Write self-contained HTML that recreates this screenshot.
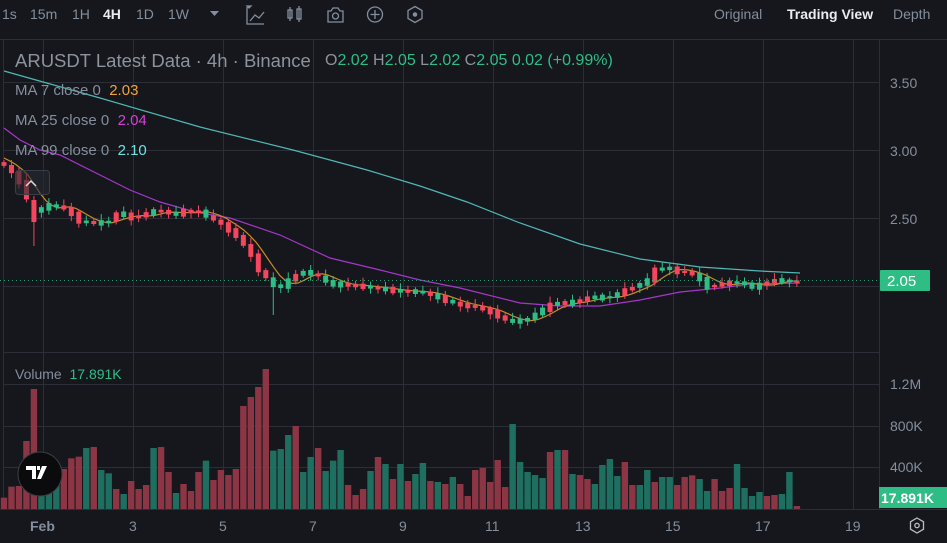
<!DOCTYPE html>
<html><head><meta charset="utf-8">
<style>
*{margin:0;padding:0;box-sizing:border-box}
body{width:947px;height:543px;background:#16171d;overflow:hidden;font-family:"Liberation Sans",sans-serif;position:relative;color:#848e9c}
.t{position:absolute;white-space:nowrap}
</style></head><body>
<svg id="c" width="947" height="543" style="position:absolute;left:0;top:0">
<rect width="947" height="543" fill="#16171d"/>
<line x1="0" y1="39.5" x2="947" y2="39.5" stroke="#2b2e36"/>
<g id="grid" stroke="#2b2e36" stroke-width="1"></g>
<g id="ma"></g>
<g id="cand"></g>
<g id="vol"></g>
<line x1="0" y1="280.5" x2="879" y2="280.5" stroke="#2ebd85" stroke-dasharray="1,3" opacity="0.8"/>
<g fill="none" stroke="#848e9c" stroke-width="1.3">
<path d="M247 7v17h17M250 21l5-6 4 3 5-6"/><path d="M247 6h4l-2 2z" fill="#848e9c"/>
<rect x="288" y="10" width="4" height="8"/><line x1="290" y1="7" x2="290" y2="21"/>
<rect x="297" y="9" width="4" height="10"/><line x1="299" y1="6" x2="299" y2="22"/>
<path d="M328 11h3l2-3h5l2 3h3v11h-15z"/><circle cx="335.5" cy="16" r="3"/>
<circle cx="375" cy="14.5" r="7.5"/><path d="M375 10v9M370.5 14.5h9"/>
<path d="M415 6.5l7 4v8l-7 4-7-4v-8z"/><circle cx="415" cy="14.5" r="1.6" fill="#848e9c"/>
<path d="M917 518l6.5 3.8v7.4L917 533l-6.5-3.8v-7.4z" stroke="#b7bdc6"/><circle cx="917" cy="525.5" r="2.2" stroke="#b7bdc6"/>
</g>
<path d="M210 11h9l-4.5 5z" fill="#848e9c"/>
<rect x="15.5" y="170.5" width="34" height="24" rx="3" fill="rgba(40,42,50,0.6)" stroke="#3a3d45"/>
<path d="M26 186l5-5 5 5" stroke="#d8d8d8" stroke-width="1.5" fill="none"/>
<circle cx="40" cy="474" r="22" fill="#0b0b0e" stroke="#3a3d45"/>
<path d="M26 466h10v13h-4v-9h-6z M37 466h3v4h-3z M42 466h5l-6 13h-4z" fill="#fff"/>
<rect x="880" y="270" width="50" height="21" rx="1" fill="#2ebd85"/>
<rect x="879" y="487" width="68" height="21" fill="#2ebd85"/>
</svg>
<div class="t" style="left:2px;top:6px;font-size:14px;">1s</div>
<div class="t" style="left:30px;top:6px;font-size:14px;">15m</div>
<div class="t" style="left:72px;top:6px;font-size:14px;">1H</div>
<div class="t" style="left:103px;top:6px;font-size:14px;color:#eaecef;font-weight:bold">4H</div>
<div class="t" style="left:136px;top:6px;font-size:14px;">1D</div>
<div class="t" style="left:168px;top:6px;font-size:14px;">1W</div>
<div class="t" style="left:714px;top:6px;font-size:14px;">Original</div>
<div class="t" style="left:787px;top:6px;font-size:14px;color:#eaecef;font-weight:bold">Trading View</div>
<div class="t" style="left:893px;top:6px;font-size:14px;">Depth</div>
<div class="t" style="left:15px;top:50px;font-size:18.5px;color:#8d939c">ARUSDT Latest Data · 4h · Binance</div>
<div class="t" style="left:325px;top:52px;font-size:16px;color:#8d939c">O<span style="color:#2ebd85">2.02</span> H<span style="color:#2ebd85">2.05</span> L<span style="color:#2ebd85">2.02</span> C<span style="color:#2ebd85">2.05</span> <span style="color:#2ebd85">0.02 (+0.99%)</span></div>
<div class="t" style="left:15px;top:82px;font-size:15px;">MA 7 close 0 &nbsp;<span style="color:#f0a33a">2.03</span></div>
<div class="t" style="left:15px;top:112px;font-size:15px;">MA 25 close 0 &nbsp;<span style="color:#d63fd6">2.04</span></div>
<div class="t" style="left:15px;top:142px;font-size:15px;">MA 99 close 0 &nbsp;<span style="color:#6ee0e0">2.10</span></div>
<div class="t" style="left:15px;top:366px;font-size:14px;">Volume &nbsp;<span style="color:#2ebd85">17.891K</span></div>
<div class="t" style="left:890px;top:75px;font-size:14px;">3.50</div>
<div class="t" style="left:890px;top:143px;font-size:14px;">3.00</div>
<div class="t" style="left:890px;top:211px;font-size:14px;">2.50</div>
<div class="t" style="left:887px;top:273px;font-size:15px;color:#fff">2.05</div>
<div class="t" style="left:890px;top:376px;font-size:14px;">1.2M</div>
<div class="t" style="left:890px;top:418px;font-size:14px;">800K</div>
<div class="t" style="left:890px;top:459px;font-size:14px;">400K</div>
<div class="t" style="left:881px;top:490px;font-size:14px;color:#fff;font-weight:bold">17.891K</div>
<div class="t" style="left:30px;top:518px;font-size:14px;font-weight:bold">Feb</div>
<div class="t" style="left:129px;top:518px;font-size:14px;">3</div>
<div class="t" style="left:219px;top:518px;font-size:14px;">5</div>
<div class="t" style="left:309px;top:518px;font-size:14px;">7</div>
<div class="t" style="left:399px;top:518px;font-size:14px;">9</div>
<div class="t" style="left:485px;top:518px;font-size:14px;">11</div>
<div class="t" style="left:575px;top:518px;font-size:14px;">13</div>
<div class="t" style="left:665px;top:518px;font-size:14px;">15</div>
<div class="t" style="left:755px;top:518px;font-size:14px;">17</div>
<div class="t" style="left:845px;top:518px;font-size:14px;">19</div>
<script>
(function(){
var NS="http://www.w3.org/2000/svg";
function el(p,t,a){var e=document.createElementNS(NS,t);for(var k in a)e.setAttribute(k,a[k]);document.getElementById(p).appendChild(e);return e;}
[43,133,223,313,403,493,583,673,763,853].forEach(function(x){el("grid","line",{x1:x+.5,y1:40,x2:x+.5,y2:510});});
[82,150,218,286,352,384,426,467,509].forEach(function(y){el("grid","line",{x1:3,y1:y+.5,x2:879,y2:y+.5});});
el("grid","line",{x1:879.5,y1:40,x2:879.5,y2:510});
el("grid","line",{x1:3.5,y1:40,x2:3.5,y2:510});
el("grid","line",{x1:0,y1:509.5,x2:947,y2:509.5});
var tops=[413,380,378,243,87,370,360,375,327,295,290,264,261,330,340,387,402,363,387,375,264,261,336,399,372,393,336,302,360,330,345,327,138,111,81,27,272,267,225,198,336,291,264,333,302,270,375,405,387,333,291,312,357,312,363,342,309,363,366,372,351,372,408,330,324,366,300,381,192,306,336,345,354,276,270,270,342,345,357,372,315,297,348,306,375,375,330,366,351,351,375,351,346,357,393,357,393,384,312,384,408,396,408,405,402,336,438];
var cols="rrrrrgggrrrgrggrgrrrgrrgrrrgrrrrrrrrgggrggrgggrrrgrgrgrggrgrgrrrrrrrgggggrgrgrrggggrrggrggrrrggrrrggggrrgg";
var kp=[[0,162],[8,166],[15,172],[28,190],[35,212],[43,210],[50,205],[58,206],[65,207],[73,212],[80,220],[88,223],[95,222],[102,223],[110,224],[118,213],[125,214],[133,218],[140,217],[148,214],[155,212],[163,210],[170,213],[178,215],[185,211],[193,212],[200,211],[208,214],[215,220],[223,222],[230,230],[238,233],[245,243],[253,252],[260,268],[268,276],[275,286],[283,287],[290,283],[298,275],[305,272],[313,273],[320,275],[328,281],[335,285],[343,284],[350,285],[370,287],[400,291],[425,292],[440,297],[462,305],[480,307],[500,315],[512,322],[530,320],[538,314],[545,310],[560,302],[567,304],[585,300],[592,297],[610,298],[625,292],[632,289],[640,285],[650,282],[655,272],[663,268],[672,268],[680,272],[690,272],[695,274],[702,278],[710,287],[720,285],[730,283],[745,282],[752,287],[760,287],[770,282],[780,280],[800,282]];
function f(x){for(var i=1;i<kp.length;i++){if(x<=kp[i][0]){var a=kp[i-1],b=kp[i];return a[1]+(b[1]-a[1])*(x-a[0])/(b[0]-a[0]);}}return kp[kp.length-1][1];}
var G="#2ebd85",R="#f6465d",GV="#1f6f60",RV="#8c3544";
for(var i=0;i<tops.length;i++){
 var x=4+i*7.48,c=cols[i]==="g";
 var y1=f(x-3.7),y2=f(x+3.7);var bt=Math.min(y1,y2),bb=Math.max(y1,y2);
 var ex=((i*37)%7)*0.9;
 bt-=ex/2;bb+=ex/2;
 if(bb-bt<2){bt-=1;bb+=1;}
 if(i==4){bt=200;bb=222;}
 var wt=bt-2-((i*13)%5),wb=bb+2+((i*7)%4);
 if(i==4)wb=246;if(i==36)wb=315;
 el("cand","line",{x1:x,y1:wt,x2:x,y2:wb,stroke:c?G:R,"stroke-width":1});
 el("cand","rect",{x:x-2.5,y:bt,width:5,height:bb-bt,fill:c?G:R});
 var vt=360+tops[i]/3;
 el("vol","rect",{x:x-3.2,y:vt,width:6.4,height:509-vt,fill:c?GV:RV});
}
function pl(pts,col){el("ma","polyline",{points:pts.map(function(p){return p.join(",")}).join(" "),fill:"none",stroke:col,"stroke-width":1.2});}
pl([[4,71],[100,98],[200,127],[293,150],[367,170],[420,186],[467,202],[520,223],[580,244],[640,259],[700,267],[760,271],[800,273]],"#4fb8b4");
pl([[4,128],[20,140],[40,150],[60,155],[100,175],[130,190],[160,202],[195,212],[230,218],[280,235],[330,258],[380,270],[420,280],[460,288],[520,303],[560,306],[600,306],[640,300],[680,292],[720,288],[750,284],[800,283]],"#a636c9");
var m=[];for(var xx=4;xx<=800;xx+=6){var s=0,n=0;for(var d=-24;d<=0;d+=3){s+=f(xx+d);n++;}m.push([xx,s/n]);}
pl(m,"#c98a2a");
})();
</script>
</body></html>
